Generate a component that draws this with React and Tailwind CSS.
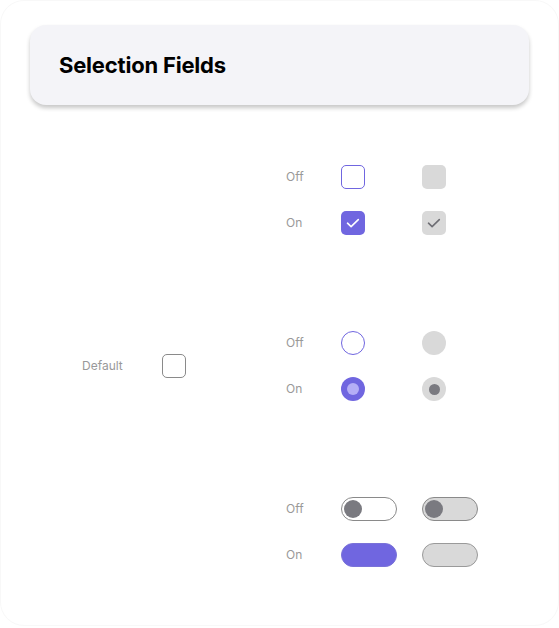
import React from "react";

const PURPLE = "bg-[#7066e0]";

function Check({ color }) {
  return (
    <svg width="24" height="24" viewBox="0 0 24 24" fill="none">
      <path d="M6.5 12.2l3.6 3.4 7.2-7" stroke={color} strokeWidth="1.6" strokeLinecap="round" strokeLinejoin="round" />
    </svg>
  );
}

function Row({ label, children }) {
  return (
    <div className="flex items-center h-[24px]">
      <span className="w-[55px] text-[12px] text-[#999999]">{label}</span>
      {children}
    </div>
  );
}

function Cell({ children }) {
  return <div className="w-[81px] flex items-center">{children}</div>;
}

export default function App() {
  return (
    <div className="w-full h-[628px] bg-white">
      <div className="h-[626px] rounded-[24px] border border-[#f8f8f8] px-[29px] pt-[24px] font-['Inter',sans-serif]">
        <div className="h-[80px] rounded-[16px] bg-[#f4f4f8] shadow-[0_3px_4px_rgba(0,0,0,0.22)] pl-[29px] flex items-center">
          <h1 className="text-[22px] font-bold text-black tracking-[-0.2px]">Selection Fields</h1>
        </div>

        <div className="flex mt-[60px]">
          <div className="w-[256px] pl-[52px] flex items-center">
            <span className="w-[80px] text-[12px] text-[#999999]">Default</span>
            <div className="w-[24px] h-[24px] rounded-[5px] border border-[#8a8a8a]" />
          </div>

          <div className="flex flex-col gap-[96px]">
            <div className="flex flex-col gap-[22px]">
              <Row label="Off">
                <Cell><div className="w-[24px] h-[24px] rounded-[5px] border border-[#7066e0]" /></Cell>
                <Cell><div className="w-[24px] h-[24px] rounded-[5px] bg-[#d9d9d9]" /></Cell>
              </Row>
              <Row label="On">
                <Cell><div className={`w-[24px] h-[24px] rounded-[5px] ${PURPLE}`}><Check color="#ffffff" /></div></Cell>
                <Cell><div className="w-[24px] h-[24px] rounded-[5px] bg-[#d9d9d9]"><Check color="#6e6e74" /></div></Cell>
              </Row>
            </div>

            <div className="flex flex-col gap-[22px]">
              <Row label="Off">
                <Cell><div className="w-[24px] h-[24px] rounded-full border border-[#7066e0]" /></Cell>
                <Cell><div className="w-[24px] h-[24px] rounded-full bg-[#d9d9d9]" /></Cell>
              </Row>
              <Row label="On">
                <Cell>
                  <div className={`w-[24px] h-[24px] rounded-full ${PURPLE} flex items-center justify-center`}>
                    <div className="w-[12px] h-[12px] rounded-full bg-[#b5aef6]" />
                  </div>
                </Cell>
                <Cell>
                  <div className="w-[24px] h-[24px] rounded-full bg-[#d9d9d9] flex items-center justify-center">
                    <div className="w-[11px] h-[11px] rounded-full bg-[#7a7a80]" />
                  </div>
                </Cell>
              </Row>
            </div>

            <div className="flex flex-col gap-[22px]">
              <Row label="Off">
                <Cell>
                  <div className="w-[56px] h-[24px] rounded-full border border-[#8a8a8a] bg-white flex items-center pl-[2px]">
                    <div className="w-[18px] h-[18px] rounded-full bg-[#7a7a80]" />
                  </div>
                </Cell>
                <Cell>
                  <div className="w-[56px] h-[24px] rounded-full border border-[#8a8a8a] bg-[#d9d9d9] flex items-center pl-[2px]">
                    <div className="w-[18px] h-[18px] rounded-full bg-[#7a7a80]" />
                  </div>
                </Cell>
              </Row>
              <Row label="On">
                <Cell><div className={`w-[56px] h-[24px] rounded-full ${PURPLE} border border-[#7a72d8]`} /></Cell>
                <Cell><div className="w-[56px] h-[24px] rounded-full bg-[#d9d9d9] border border-[#9a9a9a]" /></Cell>
              </Row>
            </div>
          </div>
        </div>
      </div>
    </div>
  );
}
